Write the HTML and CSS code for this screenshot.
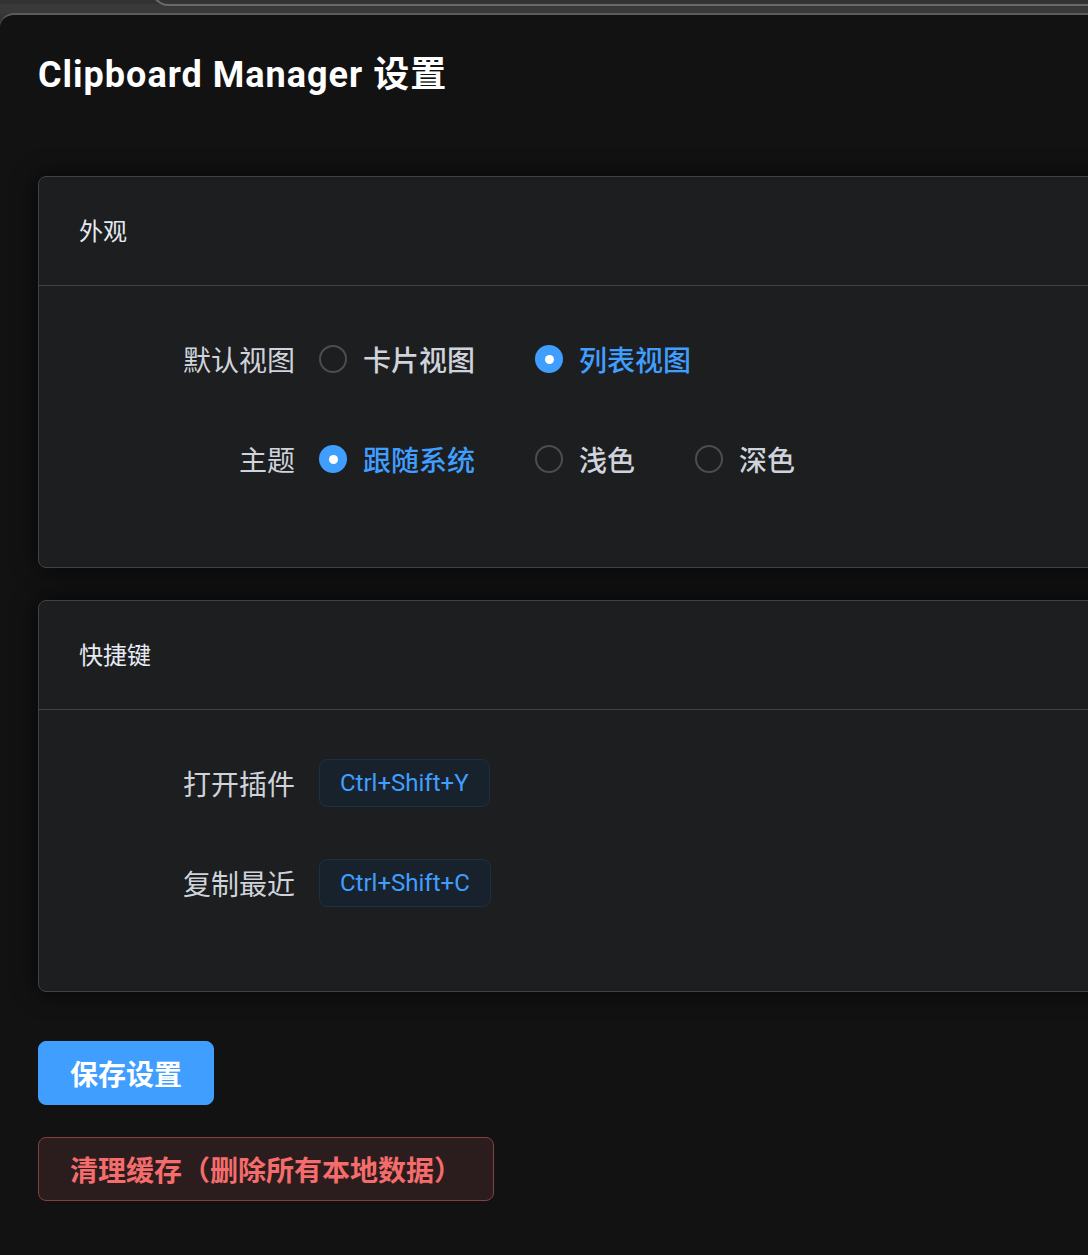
FILE: index.html
```html
<!DOCTYPE html>
<html lang="zh-CN">
<head>
    <meta charset="UTF-8">
    <meta name="viewport" content="width=device-width, initial-scale=1.0">
    <title>Clipboard Manager 设置</title>
    <link rel="stylesheet" href="styles.css">
</head>
<body>
    <div class="chrome">
        <div class="chrome-tab"></div>
    </div>

    <div class="window">
        <div class="settings">
            <h1 class="page-title">Clipboard Manager 设置</h1>

            <!-- 外观 -->
            <div class="card">
                <div class="card-header">外观</div>
                <div class="card-body">
                    <div class="form-item">
                        <div class="form-label">默认视图</div>
                        <div class="form-content">
                            <label class="radio">
                                <span class="radio-circle"></span>
                                <span class="radio-text">卡片视图</span>
                            </label>
                            <label class="radio is-checked">
                                <span class="radio-circle"></span>
                                <span class="radio-text">列表视图</span>
                            </label>
                        </div>
                    </div>
                    <div class="form-item">
                        <div class="form-label">主题</div>
                        <div class="form-content">
                            <label class="radio is-checked">
                                <span class="radio-circle"></span>
                                <span class="radio-text">跟随系统</span>
                            </label>
                            <label class="radio">
                                <span class="radio-circle"></span>
                                <span class="radio-text">浅色</span>
                            </label>
                            <label class="radio">
                                <span class="radio-circle"></span>
                                <span class="radio-text">深色</span>
                            </label>
                        </div>
                    </div>
                </div>
            </div>

            <!-- 快捷键 -->
            <div class="card">
                <div class="card-header">快捷键</div>
                <div class="card-body">
                    <div class="form-item">
                        <div class="form-label">打开插件</div>
                        <div class="form-content">
                            <span class="tag">Ctrl+Shift+Y</span>
                        </div>
                    </div>
                    <div class="form-item">
                        <div class="form-label">复制最近</div>
                        <div class="form-content">
                            <span class="tag">Ctrl+Shift+C</span>
                        </div>
                    </div>
                </div>
            </div>

            <div class="actions">
                <button class="btn btn-primary">保存设置</button>
                <button class="btn btn-danger">清理缓存（删除所有本地数据）</button>
            </div>
        </div>
    </div>
</body>
</html>
```

FILE: styles.css
```css
html, body {
    margin: 0;
    padding: 0;
    height: 100%;
}

body {
    background-color: #353535;
    font-family: Roboto, "Noto Sans CJK SC", sans-serif;
    overflow: hidden;
}

/* 顶部窗口边框 */
.chrome {
    position: relative;
    height: 13px;
    background-color: #393939;
    overflow: hidden;
}

.chrome-tab {
    position: absolute;
    left: 0;
    top: -20px;
    width: 100%;
    height: 24px;
    background-color: #333333;
}

.chrome-tab::after {
    content: "";
    position: absolute;
    left: 152px;
    right: 0;
    top: 0;
    bottom: -2px;
    background-color: #333333;
    border-left: 2px solid #6a6a6a;
    border-bottom: 2px solid #6a6a6a;
    border-bottom-left-radius: 16px;
}

.window {
    background-color: #121212;
    border-top: 2px solid #5c5c5c;
    border-top-left-radius: 14px;
    min-height: calc(100% - 15px);
    padding: 0 38px;
    overflow: hidden;
}

.settings {
    width: 1200px;
}

.page-title {
    margin: 33px 0 74px;
    font-size: 36px;
    line-height: 54px;
    font-weight: bold;
    letter-spacing: 1px;
    color: #ffffff;
}

/* 卡片 */
.card {
    background-color: #1d1e1f;
    border: 1px solid #414243;
    border-radius: 8px;
    box-shadow: 0 0 24px rgba(0, 0, 0, 0.72);
    margin-bottom: 32px;
}

.card-header {
    padding: 37px 40px 35px;
    border-bottom: 1px solid #414243;
    font-size: 24px;
    line-height: 36px;
    color: #e5eaf3;
}

.card-body {
    padding: 41px 40px 40px;
}

.form-item {
    display: flex;
    height: 64px;
    margin-bottom: 36px;
}

.form-label {
    width: 240px;
    box-sizing: border-box;
    padding-right: 24px;
    display: flex;
    align-items: center;
    justify-content: flex-end;
    font-size: 28px;
    color: #cfd3dc;
}

.form-content {
    display: flex;
    align-items: center;
}

/* 单选框 */
.radio {
    display: inline-flex;
    align-items: center;
    height: 64px;
    margin-right: 60px;
    font-size: 28px;
    font-weight: 500;
    color: #cfd3dc;
}

.radio-circle {
    width: 28px;
    height: 28px;
    box-sizing: border-box;
    border: 2px solid #4c4d4f;
    border-radius: 50%;
    position: relative;
}

.radio-text {
    padding-left: 16px;
}

.radio.is-checked .radio-circle {
    background-color: #409eff;
    border-color: #409eff;
}

.radio.is-checked .radio-circle::after {
    content: "";
    position: absolute;
    left: 50%;
    top: 50%;
    width: 9px;
    height: 9px;
    margin: -4.5px 0 0 -4.5px;
    border-radius: 50%;
    background-color: #ffffff;
}

.radio.is-checked .radio-text {
    color: #409eff;
}

/* 快捷键标签 */
.tag {
    display: inline-flex;
    align-items: center;
    height: 48px;
    padding: 0 20px;
    box-sizing: border-box;
    background-color: #18222c;
    border: 1px solid #1d3043;
    border-radius: 8px;
    color: #409eff;
    font-size: 24px;
}

/* 按钮 */
.actions {
    display: flex;
    flex-direction: column;
    align-items: flex-start;
    gap: 32px;
    margin-top: 49px;
}

.btn {
    height: 64px;
    padding: 0 31px;
    border-radius: 8px;
    font-family: inherit;
    font-size: 28px;
    font-weight: 600;
    cursor: pointer;
}

.btn-primary {
    background-color: #409eff;
    border: 1px solid #409eff;
    color: #ffffff;
}

.btn-danger {
    background-color: #2b1d1d;
    border: 1px solid #854040;
    color: #f56c6c;
}
```
